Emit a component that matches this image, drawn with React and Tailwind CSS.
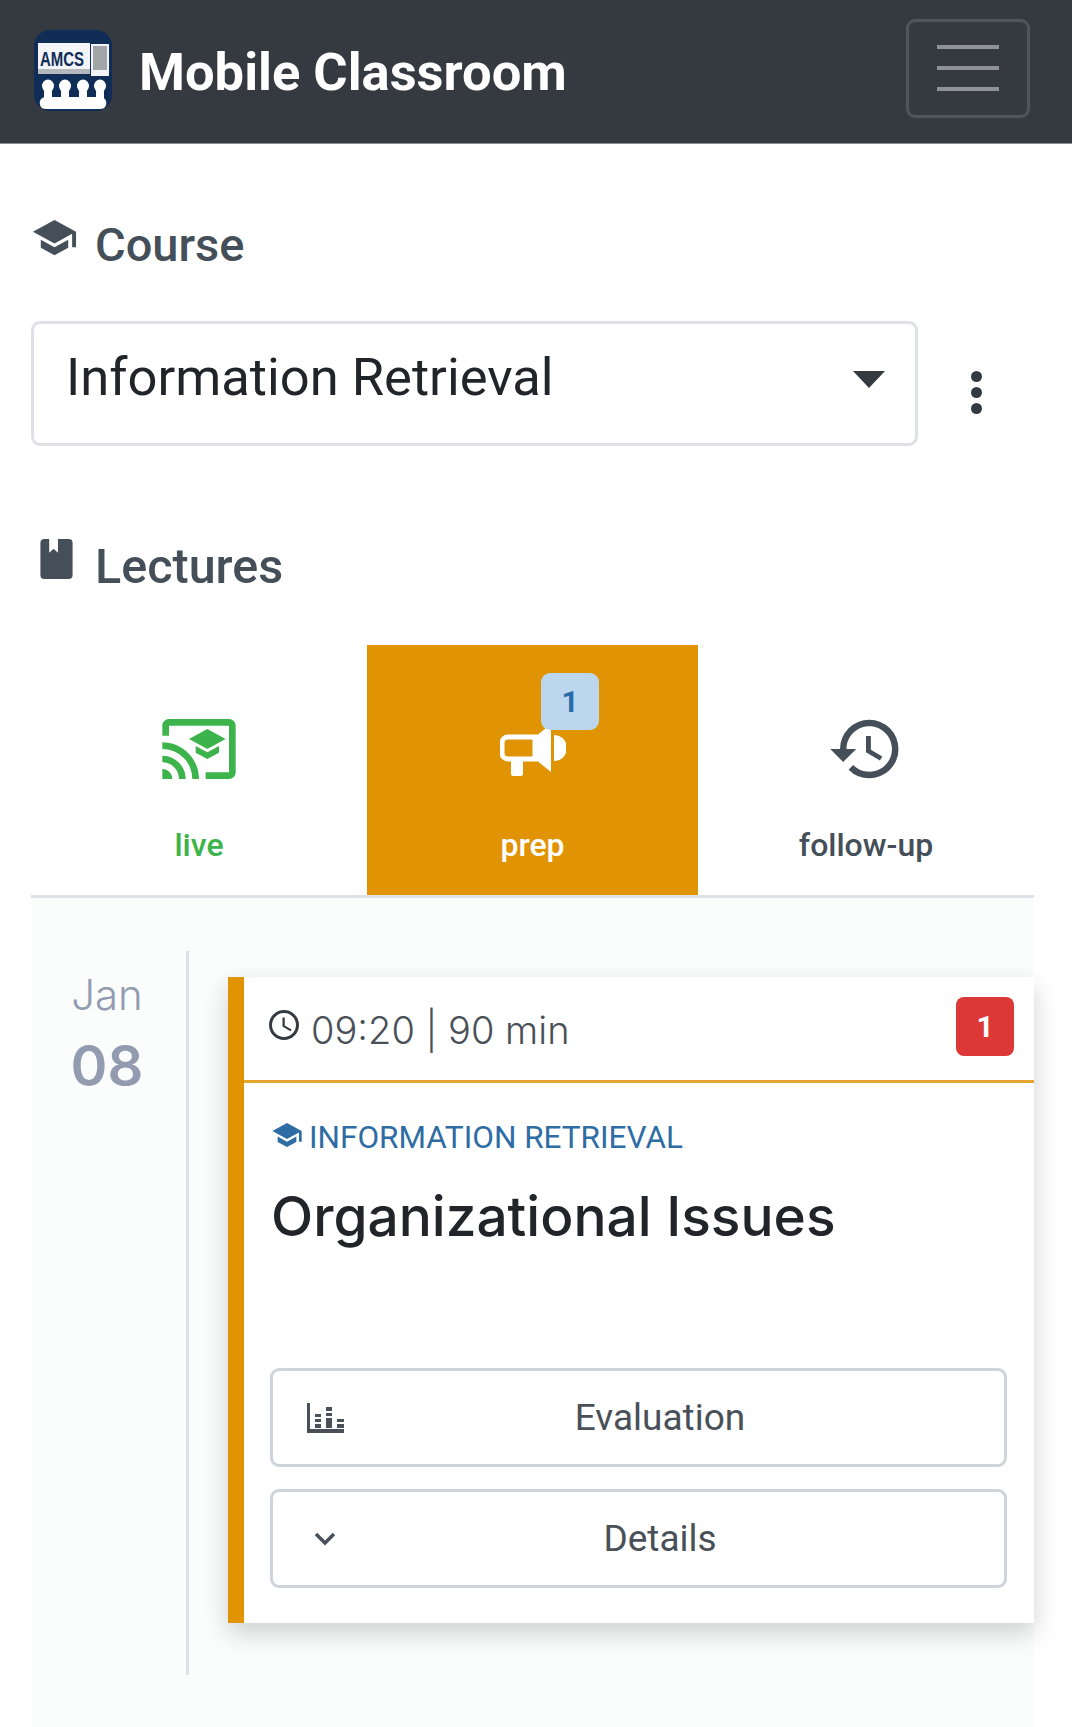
import React from 'react';
import { MdSchool, MdCastForEducation, MdHistory, MdAccessTime } from 'react-icons/md';

const Logo = () => (
  <svg width="78" height="81" viewBox="0 0 78 81" className="shrink-0">
    <rect width="78" height="81" rx="16" fill="#0f2d57" />
    <rect x="4" y="13" width="52" height="31" fill="#f2f4f7" />
    <rect x="4" y="39" width="52" height="5" fill="#b4b8bd" />
    <text x="28" y="36" textAnchor="middle" fontFamily="Liberation Sans, sans-serif" fontWeight="700" fontSize="20" textLength="44" lengthAdjust="spacingAndGlyphs" fill="#0f2d57">AMCS</text>
    <rect x="57" y="14" width="18" height="32" fill="#f2f4f7" />
    <rect x="59" y="16" width="14" height="24" fill="#a3a5a8" />
    {[14, 31, 49, 66].map((x) => (
      <g key={x} fill="#fff">
        <ellipse cx={x} cy="56" rx="6" ry="6.500" />
        <rect x={x - 4} y="60" width="8" height="10" rx="2" />
      </g>
    ))}
    <path d="M6 75c-1-4 1-8 6-8h54c5 0 7 4 6 8-1 3-3 4-6 4H12c-3 0-5-1-6-4z" fill="#fff" />
  </svg>
);

const BookIcon = () => (
  <svg width="33" height="40" viewBox="0 0 33 41" className="shrink-0">
    <path d="M4 0h5v14l4.500-4 4.500 4V0h11a4 4 0 0 1 4 4v33a4 4 0 0 1-4 4H4a4 4 0 0 1-4-4V4a4 4 0 0 1 4-4z" fill="#454f59" />
  </svg>
);

const Megaphone = () => (
  <svg width="66" height="53" viewBox="0 0 66 53" fill="#fff" className="shrink-0">
    <path d="M8 14h27v22H8a6 6 0 0 1-6-6v-10a6 6 0 0 1 6-6z" fill="none" stroke="#fff" strokeWidth="5" />
    <path d="M11 37h12v14a2 2 0 0 1-2 2h-8a2 2 0 0 1-2-2z" />
    <path d="M36 13L51 1v48L36 37z" />
    <path d="M54 12a13 13 0 0 1 0 26z" />
  </svg>
);

const ChartIcon = () => (
  <svg width="37" height="30" viewBox="0 0 37 30" fill="#495057" className="shrink-0">
    <rect x="0" y="0" width="3" height="30" />
    <rect x="0" y="26" width="37" height="4" />
    <rect x="8" y="11" width="6" height="3" />
    <rect x="8" y="16" width="6" height="3" />
    <rect x="8" y="21" width="6" height="4" />
    <rect x="19" y="4" width="6" height="4" />
    <rect x="19" y="10" width="6" height="3" />
    <rect x="19" y="15" width="6" height="10" />
    <rect x="30" y="16" width="7" height="3" />
    <rect x="30" y="21" width="7" height="4" />
  </svg>
);

const Chevron = () => (
  <svg width="22" height="14" viewBox="0 0 22 14" fill="none" stroke="#495057" strokeWidth="3.500" className="shrink-0">
    <path d="M2 2l9 9 9-9" />
  </svg>
);

const Tab = ({ icon, label, active, color, badge }) => (
  <div className={`relative flex flex-col items-center pt-[69px] ${active ? 'w-[331px] flex-none bg-[#e09404] text-white' : `flex-1 ${color}`}`}>
    <div className="h-[70px] flex items-center justify-center">{icon}</div>
    <div className="mt-[41px] text-[32px] leading-[40px] font-medium">{label}</div>
    {badge && (
      <div className="absolute left-[174px] top-[28px] w-[58px] h-[57px] rounded-[9px] bg-[#bcd6ee] text-[#2a6cab] text-[30px] font-bold flex items-center justify-center">
        {badge}
      </div>
    )}
  </div>
);

const ActionButton = ({ icon, label, iconBox }) => (
  <div className="relative h-[99px] border-[3px] border-[#ced4da] rounded-[9px] flex items-center justify-center text-[37px] text-[#495057]">
    <div className={`absolute top-0 bottom-0 flex items-center ${iconBox}`}>{icon}</div>
    <span className="ml-[43px]">{label}</span>
  </div>
);

const App = () => {
  return (
    <div className="h-[1727px] overflow-hidden bg-white font-[Roboto,sans-serif]">
      <header className="h-[144px] bg-[#343a40] flex items-center justify-between pl-[34px] pr-[42px] border-b border-[#8c9095]">
        <div className="flex items-center gap-[27px] mt-[-2px]">
          <Logo />
          <div className="text-[52.500px] font-bold text-white mt-[4px]">Mobile Classroom</div>
        </div>
        <div className="w-[124px] h-[99px] mt-[-7px] border-[3px] border-[#4f555a] rounded-[9px] flex flex-col items-center justify-center gap-[17px]">
          <span className="block w-[62px] h-[4px] bg-[#8f9295]"></span>
          <span className="block w-[62px] h-[4px] bg-[#8f9295]"></span>
          <span className="block w-[62px] h-[4px] bg-[#8f9295]"></span>
        </div>
      </header>

      <main className="pl-[31px] pr-[38px]">
        <div className="flex items-center h-[56px] mt-[73px] text-[#454f59] text-[47px] font-medium">
          <MdSchool size={47} className="mt-[-16px] mr-[17px] shrink-0" />
          <span>Course</span>
        </div>

        <div className="flex items-center mt-[48px]">
          <div className="w-[887px] h-[125px] border-[3px] border-[#dee2e6] rounded-[9px] flex items-center justify-between pl-[32px] pr-[30px] text-[52.500px] text-[#212529]">
            <span className="mt-[-12px]">Information Retrieval</span>
            <span className="w-0 h-0 border-x-[16px] border-x-transparent border-t-[17px] border-t-[#343a40] mt-[-8px]"></span>
          </div>
          <div className="w-[116px] flex flex-col items-center gap-[5px] mt-[18px]">
            <span className="block w-[11px] h-[11px] rounded-full bg-[#343a40]"></span>
            <span className="block w-[11px] h-[11px] rounded-full bg-[#343a40]"></span>
            <span className="block w-[11px] h-[11px] rounded-full bg-[#343a40]"></span>
          </div>
        </div>

        <div className="flex items-center h-[56px] mt-[93px] text-[#454f59] text-[48.500px] font-medium">
          <div className="ml-[9px] mr-[22px] mt-[-17px]"><BookIcon /></div>
          <span>Lectures</span>
        </div>

        <div className="flex h-[259px] mt-[44px] pt-[6px] border-b-[3px] border-[#dee2e6]">
          <Tab icon={<MdCastForEducation size={80} />} label="live" color="text-[#3cb44b]" />
          <Tab icon={<Megaphone />} label="prep" active badge="1" />
          <Tab icon={<MdHistory size={78} />} label="follow-up" color="text-[#454f59]" />
        </div>

        <div className="flex h-[830px] bg-[#fbfcfc] pt-[53px]">
          <div className="w-[158px] h-[724px] border-r-[3px] border-[#dee2e6] flex flex-col items-center font-[Inter,sans-serif] text-[#929bb0] pt-[19px] pr-[3px]">
            <div className="text-[42px] leading-[50px] font-light">Jan</div>
            <div className="text-[56px] leading-[64px] mt-[14px] font-semibold">08</div>
          </div>
          <div className="ml-[39px] mt-[26px] flex-1 h-[646px] bg-white border-l-[16px] border-[#e09404] shadow-[0_10px_24px_rgba(0,0,0,0.18)]">
            <div className="h-[106px] border-b-[3px] border-[#e4a62e] flex items-center justify-between pl-[22px] pr-[20px] font-[Inter,sans-serif] text-[38px] text-[#495057]">
              <div className="flex items-center">
                <MdAccessTime size={36} className="text-[#343a40] mt-[-8px] mr-[9px]" />
                <span className="font-light mt-[4px]">09:20 | 90 min</span>
              </div>
              <div className="w-[58px] h-[59px] rounded-[8px] bg-[#dc3838] text-white text-[30px] font-bold font-[Roboto,sans-serif] flex items-center justify-center mt-[-4px]">1</div>
            </div>
            <div className="pl-[26px] pr-[27px]">
              <div className="flex items-center mt-[35px] text-[#2e6da4] text-[31.500px] leading-[40px]">
                <MdSchool size={32} className="ml-[1px] mt-[-6px] mr-[6px]" />
                <span>INFORMATION RETRIEVAL</span>
              </div>
              <div className="mt-[26px] ml-[1px] font-[Inter,sans-serif] text-[55px] leading-[64px] font-medium text-[#212529]">Organizational Issues</div>
              <div className="mt-[120px] flex flex-col gap-[22px]">
                <ActionButton icon={<ChartIcon />} iconBox="left-[34px]" label="Evaluation" />
                <ActionButton icon={<Chevron />} iconBox="left-[41px]" label="Details" />
              </div>
            </div>
          </div>
        </div>
      </main>
    </div>
  );
};

export default App;
